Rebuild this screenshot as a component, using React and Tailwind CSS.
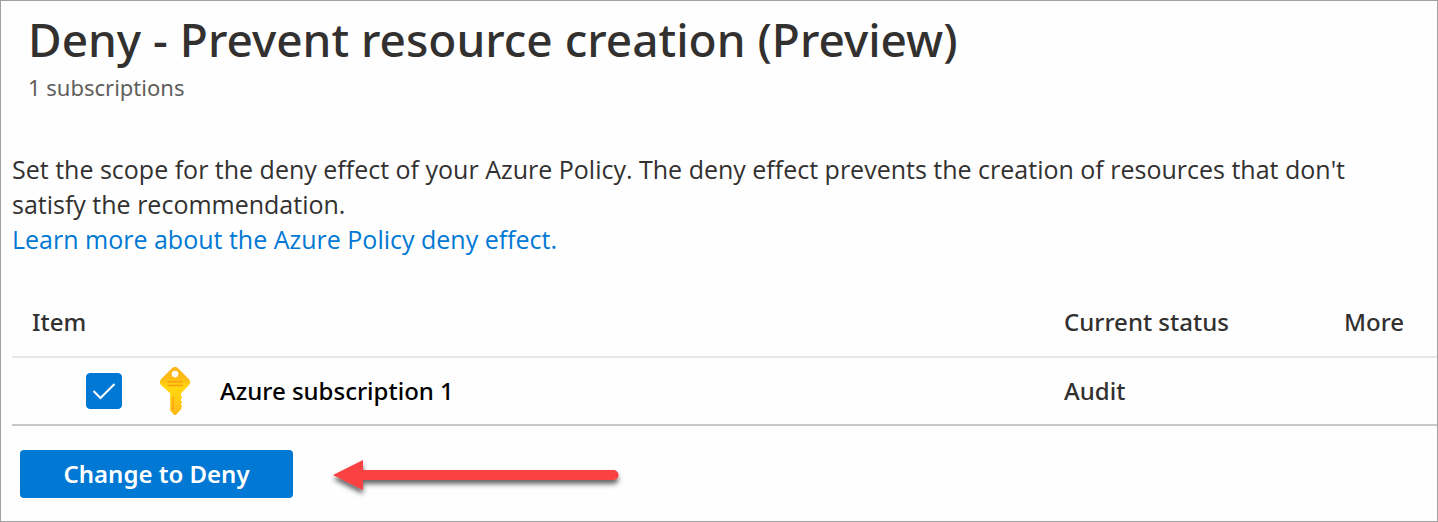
import { useState } from "react";

function KeyIcon() {
  return (
    <svg viewBox="0 0 30 48" className="h-12 w-[30px] shrink-0" aria-hidden="true">
      <defs>
        <linearGradient id="key-body" x1="0" y1="0" x2="0" y2="1">
          <stop offset="0" stopColor="#feb318" />
          <stop offset="0.25" stopColor="#fdbc16" />
          <stop offset="0.42" stopColor="#ffd70f" />
          <stop offset="0.6" stopColor="#ffd010" />
          <stop offset="1" stopColor="#feb718" />
        </linearGradient>
      </defs>
      <path
        d="M12.2 1.1a4 4 0 0 1 5.6 0l11 11a4.300 4.300 0 0 1 0 6.200L21 26.200V29l1.300 1.300-1.300 1.500v2l1.300 1.400-1.300 1.500v1l1.300 1.800-1.300 1.600.3 1-5.300 5.600a1.400 1.400 0 0 1-2 0l-3.800-4.200V26.200L1.200 18.300a4.300 4.300 0 0 1 0-6.200zM15 3.800a3.300 3.300 0 1 0 0 6.600 3.300 3.300 0 0 0 0-6.600z"
        fill="url(#key-body)"
        fillRule="evenodd"
      />
      <path d="M8 14.700h14M8 18.400h14" stroke="#ff9e0c" strokeWidth="1.500" strokeLinecap="round" />
      <path d="M13 30.500v12" stroke="#ffa30e" strokeWidth="1.400" strokeLinecap="round" />
    </svg>
  );
}

function Arrow() {
  return (
    <svg viewBox="0 0 300 48" className="h-12 w-[300px] shrink-0 overflow-visible" aria-hidden="true">
      <defs>
        <filter id="arrow-shadow" x="-5%" y="-30%" width="110%" height="190%">
          <feDropShadow dx="0" dy="4" stdDeviation="2.500" floodColor="#000" floodOpacity="0.6" />
        </filter>
      </defs>
      <path d="M0 25 30 10v10h250.500a5 5 0 0 1 0 10H30v10z" fill="#fb4343" filter="url(#arrow-shadow)" />
    </svg>
  );
}

export default function App() {
  const [checked, setChecked] = useState(true);
  return (
    <main className="min-h-screen border border-[#a0a0a0] bg-[#fefefe] font-['Noto_Sans','Open_Sans',sans-serif] text-[#323130]">
      <header className="px-[27px] pt-2">
        <h1 className="text-[46px] leading-[60px] font-medium">Deny - Prevent resource creation (Preview)</h1>
        <p className="text-[22px] leading-9 text-[#605e5c]">1 subscriptions</p>
      </header>

      <section className="mt-[47px] px-[11px] font-['Open_Sans','Noto_Sans',sans-serif] text-[25px] leading-[35px]">
        <p className="max-w-[1360px]">
          Set the scope for the deny effect of your Azure Policy. The deny effect prevents the creation of resources
          that don't satisfy the recommendation.
        </p>
        <a href="#deny-effect" className="text-[#0078d4]">
          Learn more about the Azure Policy deny effect.
        </a>
      </section>

      <div className="mt-[30px] pl-[11px]">
        <table className="w-full table-fixed border-collapse text-left text-[24px] leading-8">
          <thead>
            <tr className="h-[70px] border-b-2 border-[#e8e8e8]">
              <th className="pl-5 font-medium">Item</th>
              <th className="w-[280px] font-medium">Current status</th>
              <th className="w-[93px] font-medium">More</th>
            </tr>
          </thead>
          <tbody>
            <tr className="h-[68px] border-b-2 border-[#c8c8c8]">
              <td className="pl-[74px]">
                <div className="flex items-center">
                  <span className="grid size-9 shrink-0 grid-cols-1">
                    <input
                      id="subscription-1"
                      type="checkbox"
                      checked={checked}
                      onChange={(e) => setChecked(e.target.checked)}
                      className="peer col-start-1 row-start-1 size-9 appearance-none rounded border border-[#605e5c] checked:border-[#0078d4] checked:bg-[#0078d4]"
                    />
                    <svg
                      viewBox="0 0 36 36"
                      className="pointer-events-none invisible col-start-1 row-start-1 size-9 peer-checked:visible"
                      fill="none"
                      stroke="#fff"
                      strokeWidth="2"
                      aria-hidden="true"
                    >
                      <path d="M7.500 18 14.500 25 28.500 11" />
                    </svg>
                  </span>
                  <span className="ml-[38px] flex">
                    <KeyIcon />
                  </span>
                  <label htmlFor="subscription-1" className="ml-[30px] font-medium text-black">
                    Azure subscription 1
                  </label>
                </div>
              </td>
              <td className="font-medium">Audit</td>
              <td></td>
            </tr>
          </tbody>
        </table>
      </div>

      <div className="flex items-center gap-10 px-[19px] pt-6 pb-5">
        <button
          type="button"
          className="h-12 w-[273px] shrink-0 rounded bg-[#0078d4] text-[24px] leading-8 font-semibold text-white"
        >
          Change to Deny
        </button>
        <Arrow />
      </div>
    </main>
  );
}
